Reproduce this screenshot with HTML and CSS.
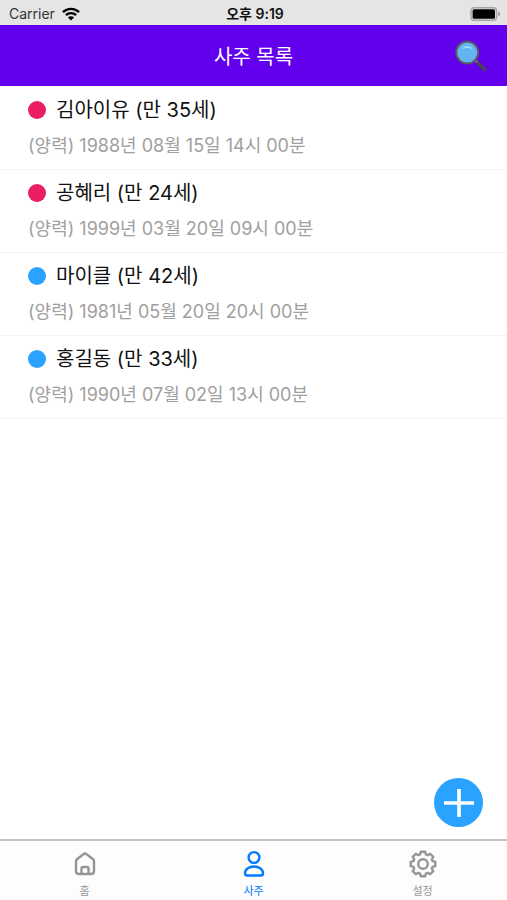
FILE: index.html
```html
<!DOCTYPE html>
<html lang="ko">
<head>
    <meta charset="UTF-8">
    <meta name="viewport" content="width=device-width, initial-scale=1.0">
    <title>사주 목록</title>
    <link rel="stylesheet" href="styles.css">
</head>
<body>
    <div class="status-bar">
        <div class="carrier">
            <span>Carrier</span>
            <svg width="18" height="14" viewBox="0 0 18 14" aria-hidden="true">
                <path d="M1 5.2a11.4 11.4 0 0 1 16 0M3.9 8.2a7.2 7.2 0 0 1 10.2 0" fill="none" stroke="#000" stroke-width="2.4"/>
                <path d="M9 13.6L5.9 10.5a4.4 4.4 0 0 1 6.2 0z"/>
            </svg>
        </div>
        <span class="time">오후 9:19</span>
        <svg class="battery" width="31" height="14" viewBox="0 0 31 14" aria-hidden="true">
            <rect x="1" y="0.8" width="25.5" height="12.4" rx="3" fill="none" stroke="#a4a4a4" stroke-width="1.4"/>
            <rect x="2.6" y="2.2" width="22.4" height="9.6" rx="1.6"/>
            <path d="M28 4.6c3 1 3 3.8 0 4.8z" fill="#a4a4a4"/>
        </svg>
    </div>

    <header class="header">
        <h1>사주 목록</h1>
        <button class="search-button" type="button" aria-label="검색">
            <svg width="32" height="32" viewBox="0 0 32 32" aria-hidden="true">
                <path d="M20.5 20.5l4 4" stroke="#77717c" stroke-width="2.4"/>
                <path d="M23.5 23.5l6 6" stroke="#49454f" stroke-width="3.6" stroke-linecap="round"/>
                <circle cx="12.2" cy="12.6" r="11" fill="#62b5f1" stroke="#5c5764" stroke-width="2"/>
                <path d="M6.700 9.2c2.6-4.4 8.4-4.4 11 0-3.5-2-7.500-2-11 0z" fill="#a5dcfb"/>
            </svg>
        </button>
    </header>

    <main class="content">
        <ul class="people">
            <li class="person">
                <div class="person-name"><span class="dot female"></span>김아이유 (만 35세)</div>
                <div class="person-birth">(양력) 1988년 08월 15일 14시 00분</div>
            </li>
            <li class="person">
                <div class="person-name"><span class="dot female"></span>공혜리 (만 24세)</div>
                <div class="person-birth">(양력) 1999년 03월 20일 09시 00분</div>
            </li>
            <li class="person">
                <div class="person-name"><span class="dot male"></span>마이클 (만 42세)</div>
                <div class="person-birth">(양력) 1981년 05월 20일 20시 00분</div>
            </li>
            <li class="person">
                <div class="person-name"><span class="dot male"></span>홍길동 (만 33세)</div>
                <div class="person-birth">(양력) 1990년 07월 02일 13시 00분</div>
            </li>
        </ul>
        <button class="add-button" type="button" aria-label="사주 추가">
            <svg width="30" height="30" viewBox="0 0 30 30" aria-hidden="true">
                <path d="M15 1v28M0 15h30" stroke="#fff" stroke-width="3.6"/>
            </svg>
        </button>
    </main>

    <nav class="tab-bar">
        <a class="tab" href="#home">
            <svg width="28" height="28" viewBox="0 0 28 28" aria-hidden="true">
                <path d="M5 11.5q0-1.500 1.200-2.500L12.400 4.200q1.600-1.200 3.200 0L21.800 9q1.200 1 1.200 2.500V21q0 3-3 3H8q-3 0-3-3z"/>
                <path d="M10.5 24v-5.500q0-1.500 1.500-1.500h4q1.500 0 1.500 1.500V24"/>
            </svg>
            <span>홈</span>
        </a>
        <a class="tab active" href="#saju">
            <svg width="28" height="28" viewBox="0 0 28 28" aria-hidden="true">
                <circle cx="14" cy="7.5" r="5.4"/>
                <path d="M7 25.5q-2 0-2-2c0-9.300 18-9.300 18 0q0 2-2 2z"/>
            </svg>
            <span>사주</span>
        </a>
        <a class="tab" href="#settings">
            <svg width="28" height="28" viewBox="-14 -14 28 28" aria-hidden="true">
                <path d="M-2.900-9.500L-2.200-12.300H2.200L2.900-9.500L4.670-8.770L7.140-10.250L10.250-7.140L8.770-4.670L9.500-2.900L12.300-2.200V2.200L9.500 2.900L8.770 4.670L10.250 7.140L7.140 10.250L4.670 8.770L2.900 9.500L2.200 12.300H-2.200L-2.900 9.500L-4.670 8.770L-7.140 10.250L-10.250 7.140L-8.770 4.670L-9.500 2.900L-12.300 2.200V-2.200L-9.500-2.900L-8.770-4.670L-10.250-7.140L-7.140-10.250L-4.670-8.770z"/>
                <circle r="4.8"/>
            </svg>
            <span>설정</span>
        </a>
    </nav>
</body>
</html>
```
FILE: styles.css
```css
* {
    box-sizing: border-box;
}

body {
    display: flex;
    flex-direction: column;
    min-height: 100vh;
    margin: 0;
    background: #fff;
    color: #111;
    font-family: Inter, "Noto Sans CJK KR", sans-serif;
}

button {
    padding: 0;
    border: 0;
    background: none;
    cursor: pointer;
}

svg {
    display: block;
}

.status-bar {
    display: grid;
    grid-template-columns: 1fr auto 1fr;
    align-items: center;
    height: 25px;
    padding: 2px 6px 0 9px;
    background: #e5e5e5;
    font-size: 14px;
    line-height: 20px;
}

.carrier {
    display: flex;
    align-items: center;
    gap: 7px;
    color: #333;
}

.time {
    font-weight: 600;
}

.battery {
    justify-self: end;
}

.header {
    display: grid;
    grid-template-columns: 1fr auto 1fr;
    align-items: center;
    height: 61px;
    padding: 0 20px;
    background: #6200ee;
    color: #fff;
}

.header h1 {
    grid-column: 2;
    margin: 0;
    font-size: 20px;
    font-weight: 400;
}

.search-button {
    justify-self: end;
}

.content {
    position: relative;
    flex: 1;
}

.people {
    margin: 0;
    padding: 1px 0 0;
    list-style: none;
}

.person {
    padding: 9px 28px 10px;
    border-bottom: 1px solid #f3f3f3;
}

.person-name {
    display: flex;
    align-items: center;
    gap: 10px;
    font-size: 20px;
    line-height: 28px;
}

.person-birth {
    margin-top: 9px;
    color: #a0a0a0;
    font-size: 18px;
    line-height: 26px;
}

.dot {
    width: 18px;
    height: 18px;
    border-radius: 50%;
}

.female {
    background: #e91e63;
}

.male {
    background: #29a3ff;
}

/* floats over the list */
.add-button {
    position: absolute;
    right: 24px;
    bottom: 12px;
    display: flex;
    align-items: center;
    justify-content: center;
    width: 49px;
    height: 49px;
    border-radius: 50%;
    background: #29a3ff;
}

.tab-bar {
    display: flex;
    height: 61px;
    border-top: 2px solid #c4c4c4;
    background: #fdfdfd;
}

.tab {
    display: flex;
    flex: 1;
    flex-direction: column;
    align-items: center;
    gap: 5px;
    padding-top: 9px;
    color: #959595;
    font-size: 11px;
    line-height: 16px;
    text-decoration: none;
}

.tab svg {
    fill: none;
    stroke: currentColor;
    stroke-width: 2.4;
    stroke-linejoin: round;
}

.tab.active {
    color: #007aff;
}
```
